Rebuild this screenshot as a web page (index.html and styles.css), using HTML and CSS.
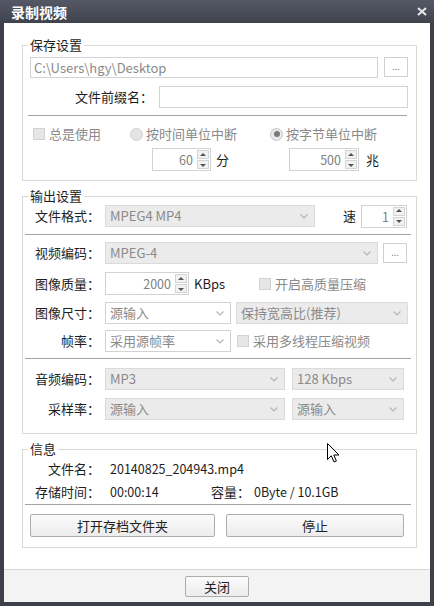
FILE: index.html
```html
<!DOCTYPE html>
<html lang="zh-CN">
<head>
<meta charset="utf-8">
<title>录制视频</title>
<link rel="stylesheet" href="styles.css">
</head>
<body>
<div class="window">
  <div class="titlebar">
    <span class="title">录制视频</span>
    <svg class="close" width="10" height="9" viewBox="0 0 10 9"><path d="M1 1 L9 8 M9 1 L1 8" /></svg>
  </div>
  <div class="content">
    <fieldset class="group g1">
      <legend>保存设置</legend>
      <div class="row r-path">
        <div class="input path">C:\Users\hgy\Desktop</div>
        <div class="btn-dots">...</div>
      </div>
      <div class="row r-prefix">
        <span class="lbl-prefix">文件前缀名<span class="colon">：</span></span>
        <div class="input prefix"></div>
      </div>
      <div class="sep sep1"></div>
      <div class="opts">
        <span class="opt"><i class="chk chk-first"></i>总是使用</span>
        <span class="opt"><i class="radio"></i>按时间单位中断</span>
        <span class="opt"><i class="radio on"></i>按字节单位中断</span>
      </div>
      <div class="spins">
        <span class="cell"></span>
        <span class="cell cell-min">
          <span class="spin s-min"><span class="val">60</span><span class="arrows"><span class="up"></span><span class="dn"></span></span></span>
          <span class="unit u-min">分</span>
        </span>
        <span class="cell cell-mb">
          <span class="spin s-mb"><span class="val">500</span><span class="arrows"><span class="up"></span><span class="dn"></span></span></span>
          <span class="unit u-mb">兆</span>
        </span>
      </div>
    </fieldset>

    <fieldset class="group g2">
      <legend>输出设置</legend>
      <div class="row r-fmt">
        <span class="lbl">文件格式<span class="colon">：</span></span>
        <div class="select sel-fmt"><span class="stext">MPEG4 MP4</span><svg class="chev" width="8" height="5" viewBox="0 0 8 5"><polyline points="0.5,0.5 4,4 7.5,0.5"/></svg></div>
        <span class="speed-lbl">速</span>
        <span class="spin s-speed"><span class="val">1</span><span class="arrows"><span class="up"></span><span class="dn"></span></span></span>
      </div>
      <div class="sep sep2"></div>
      <div class="row r-vcodec">
        <span class="lbl">视频编码<span class="colon">：</span></span>
        <div class="select sel-vcodec"><span class="stext">MPEG-4</span><svg class="chev" width="8" height="5" viewBox="0 0 8 5"><polyline points="0.5,0.5 4,4 7.5,0.5"/></svg></div>
        <div class="btn-dots dots-v">...</div>
      </div>
      <div class="row r-quality">
        <span class="lbl">图像质量<span class="colon">：</span></span>
        <span class="spin s-quality"><span class="val">2000</span><span class="arrows"><span class="up"></span><span class="dn"></span></span></span>
        <span class="kbps">KBps</span>
        <span class="opt"><i class="chk"></i>开启高质量压缩</span>
      </div>
      <div class="row r-size">
        <span class="lbl">图像尺寸<span class="colon">：</span></span>
        <div class="select white sel-half"><span class="stext">源输入</span><svg class="chev" width="8" height="5" viewBox="0 0 8 5"><polyline points="0.5,0.5 4,4 7.5,0.5"/></svg></div>
        <div class="select sel-aspect"><span class="stext">保持宽高比(推荐)</span><svg class="chev" width="8" height="5" viewBox="0 0 8 5"><polyline points="0.5,0.5 4,4 7.5,0.5"/></svg></div>
      </div>
      <div class="row r-fps">
        <span class="lbl">帧率<span class="colon">：</span></span>
        <div class="select white sel-half"><span class="stext">采用源帧率</span><svg class="chev" width="8" height="5" viewBox="0 0 8 5"><polyline points="0.5,0.5 4,4 7.5,0.5"/></svg></div>
        <span class="opt opt-mt"><i class="chk"></i>采用多线程压缩视频</span>
      </div>
      <div class="sep sep3"></div>
      <div class="row r-acodec">
        <span class="lbl">音频编码<span class="colon">：</span></span>
        <div class="select sel-a1"><span class="stext">MP3</span><svg class="chev" width="8" height="5" viewBox="0 0 8 5"><polyline points="0.5,0.5 4,4 7.5,0.5"/></svg></div>
        <div class="select sel-a2"><span class="stext">128 Kbps</span><svg class="chev" width="8" height="5" viewBox="0 0 8 5"><polyline points="0.5,0.5 4,4 7.5,0.5"/></svg></div>
      </div>
      <div class="row r-rate">
        <span class="lbl">采样率<span class="colon">：</span></span>
        <div class="select sel-a1"><span class="stext">源输入</span><svg class="chev" width="8" height="5" viewBox="0 0 8 5"><polyline points="0.5,0.5 4,4 7.5,0.5"/></svg></div>
        <div class="select sel-a2"><span class="stext">源输入</span><svg class="chev" width="8" height="5" viewBox="0 0 8 5"><polyline points="0.5,0.5 4,4 7.5,0.5"/></svg></div>
      </div>
    </fieldset>

    <fieldset class="group g3">
      <legend>信息</legend>
      <div class="row info info1">
        <span class="ilbl">文件名<span class="colon">：</span></span>
        <span class="ival">20140825_204943.mp4</span>
      </div>
      <div class="row info info2">
        <span class="ilbl">存储时间<span class="colon">：</span></span>
        <span class="ival ival-time">00:00:14</span>
        <span class="cap-lbl">容量<span class="colon">：</span></span>
        <span class="ival">0Byte / 10.1GB</span>
      </div>
      <div class="sep sep4"></div>
      <div class="row r-btns">
        <div class="btn btn-open">打开存档文件夹</div>
        <div class="btn btn-stop">停止</div>
      </div>
    </fieldset>
  </div>
  <div class="footer">
    <div class="btn btn-close">关闭</div>
  </div>
  <svg class="cursor" width="13" height="20" viewBox="0 0 13 20"><path d="M0.5 0.5 L0.5 16.5 L4.3 12.8 L7 19 L9.4 18 L6.8 12 L12 12 Z"/></svg>
</div>
</body>
</html>
```

FILE: styles.css
```css
* { box-sizing: border-box; }
html, body { margin: 0; padding: 0; }
body {
  background: #3d404a;
  font-family: "Noto Sans CJK SC", "Noto Sans", sans-serif;
  font-size: 13px;
  color: #1e1e1e;
}
.window {
  position: relative;
  width: 434px;
  height: 606px;
  background: #3d404a;
  padding: 0 4px 4px;
  display: flex;
  flex-direction: column;
}
.titlebar {
  height: 23px;
  margin: 0 -4px;
  padding: 0 7px 0 11px;
  display: flex;
  align-items: center;
  justify-content: space-between;
  background: linear-gradient(#555965, #40434e);
  flex: none;
}
.title {
  color: #ffffff;
  font-weight: bold;
  font-size: 14px;
  line-height: 18px;
}
.close path {
  stroke: #e4e4e4;
  stroke-width: 2.2;
  fill: none;
}
.content {
  height: 546px;
  background: #ffffff;
  padding-top: 13px;
  flex: none;
}
.footer {
  height: 33px;
  background: #f3f3f3;
  border-top: 1px solid #d9d9d9;
  display: flex;
  justify-content: center;
  align-items: center;
  flex: none;
}

.colon { font-family: "Noto Sans CJK TC", "Noto Sans CJK SC", sans-serif; }

/* group boxes */
.group {
  margin: 0 13px 0 18px;
  border: 1px solid #d9d9d9;
  padding: 0 8px 0 7px;
  min-width: 0;
}
.group legend {
  padding: 0 2px;
  margin-left: -2px;
  line-height: 18px;
  height: 18px;
  font-size: 13px;
  color: #1e1e1e;
}
.g1 { padding-top: 3px; padding-bottom: 9px; }
.g2 { margin-top: 6px; padding-top: 0; padding-bottom: 13px; }
.g3 { margin-top: 6px; padding-top: 0; padding-bottom: 10px; }

.row { display: flex; align-items: center; }
.sep { height: 1px; background: #a3a3a3; }
.sep1 { margin: 7px 1px 0 -2px; }
.sep2 { margin: 7px -3px 0 -5px; }
.sep3 { margin: 6px -3px 0 -5px; }
.sep4 { margin: 3px -3px 0 -5px; }

/* inputs */
.input {
  height: 22px;
  border: 1px solid #d3d3d3;
  background: #ffffff;
  padding: 0 3px;
  line-height: 19px;
  color: #8a8a8a;
  white-space: nowrap;
}
.r-path { height: 21px; align-items: flex-start; }
.path { width: 348px; height: 21px; font-size: 13px; }
.btn-dots {
  width: 24px;
  height: 20px;
  margin-left: 6px;
  border: 1px solid #d0d0d0;
  background: #ffffff;
  color: #8a8a8a;
  font-size: 9px;
  line-height: 18px;
  text-align: center;
  flex: none;
}
.dots-v { margin-left: 5px; }
.r-prefix { margin-top: 8px; }
.lbl-prefix { width: 123px; text-align: right; margin-right: 6px; line-height: 18px; flex: none; }
.prefix { flex: 1; }

/* options */
.opts {
  margin-top: 9px;
  display: grid;
  grid-template-columns: 100px 140px 138px;
  line-height: 18px;
  color: #8a8a8a;
}
.opt { display: flex; align-items: center; color: #8a8a8a; line-height: 18px; white-space: nowrap; }
.chk {
  display: block;
  width: 12px;
  height: 12px;
  border: 1px solid #d2d2d2;
  background: #e6e6e6;
  margin-right: 4px;
  flex: none;
}
.chk-first { margin-left: 3px; }
.radio {
  display: block;
  width: 13px;
  height: 13px;
  border-radius: 50%;
  border: 1px solid #d0d0d0;
  background: #e4e4e4;
  margin-right: 3px;
  flex: none;
  position: relative;
}
.radio.on { background: #e8e8e8; border-color: #c6c6c6; }
.radio.on::after {
  content: "";
  position: absolute;
  left: 2.5px;
  top: 2.5px;
  width: 6px;
  height: 6px;
  border-radius: 50%;
  background: #7a7a7a;
}

.spins {
  margin-top: 5px;
  display: grid;
  grid-template-columns: 100px 140px 138px;
  height: 23px;
}
.cell { display: flex; align-items: center; }
.cell-min { padding-left: 22px; }
.cell-mb { padding-left: 19px; }
.unit { line-height: 18px; }
.u-min { margin-left: 5px; }
.u-mb { margin-left: 7px; }

/* spinner */
.spin {
  display: flex;
  height: 23px;
  border: 1px solid #d2d2d2;
  background: #ffffff;
  flex: none;
}
.spin .val {
  flex: 1;
  text-align: right;
  padding-right: 4px;
  line-height: 21px;
  color: #808080;
  font-size: 12.5px;
}
.arrows {
  width: 13px;
  display: flex;
  flex-direction: column;
  padding: 1px 1px 1px 0;
  gap: 1px;
}
.arrows .up, .arrows .dn {
  flex: 1;
  border: 1px solid #d4d4d4;
  background: #f1f1f1;
  position: relative;
}
.arrows .up::after, .arrows .dn::after {
  content: "";
  position: absolute;
  left: 50%;
  top: 50%;
  margin-left: -3px;
  border-left: 3px solid transparent;
  border-right: 3px solid transparent;
}
.arrows .up::after { border-bottom: 3px solid #555555; margin-top: -2px; }
.arrows .dn::after { border-top: 3px solid #555555; margin-top: -1px; }
.s-min { width: 59px; }
.s-mb { width: 70px; }
.s-speed { width: 46px; margin-left: 5px; }
.s-quality { width: 84px; }

/* selects */
.lbl {
  width: 70px;
  text-align: right;
  margin-right: 5px;
  line-height: 18px;
  flex: none;
  white-space: nowrap;
}
.select {
  display: flex;
  align-items: center;
  height: 22px;
  border: 1px solid #dadada;
  background: #ebebeb;
  color: #8a8a8a;
  padding: 0 6px 0 4px;
  flex: none;
}
.select.white { background: #ffffff; border-color: #d2d2d2; }
.stext { flex: 1; line-height: 18px; white-space: nowrap; overflow: hidden; }
.chev polyline { fill: none; stroke: #b5b5b5; stroke-width: 1.2; }
.sel-fmt { width: 210px; }
.speed-lbl { margin-left: 28px; line-height: 18px; }
.sel-vcodec { width: 273px; }
.sel-half { width: 126px; }
.sel-aspect { width: 172px; margin-left: 5px; }
.sel-a1 { width: 180px; }
.sel-a2 { width: 112px; margin-left: 7px; }

.r-fmt { height: 22px; }
.r-vcodec { margin-top: 7px; height: 22px; }
.r-quality { margin-top: 8px; height: 23px; }
.kbps { width: 70px; padding-left: 5px; line-height: 18px; flex: none; }
.r-size { margin-top: 7px; height: 22px; }
.r-fps { margin-top: 6px; height: 22px; }
.opt-mt { margin-left: 6px; }
.r-acodec { margin-top: 9px; height: 22px; }
.r-rate { margin-top: 8px; height: 22px; }

/* info */
.info { line-height: 18px; height: 18px; }
.info1 { margin-top: 2px; }
.info2 { margin-top: 5px; }
.ilbl { width: 70px; text-align: right; margin-right: 10px; flex: none; white-space: nowrap; }
.ival { white-space: nowrap; font-size: 12.5px; }
.ival-time { width: 101px; flex: none; }
.cap-lbl { margin-right: 4px; }

/* buttons */
.btn {
  height: 23px;
  border: 1px solid #adadad;
  border-radius: 2px;
  background: linear-gradient(#fbfbfb, #ececec);
  color: #222222;
  text-align: center;
  line-height: 21px;
  flex: none;
}
.r-btns { margin-top: 9px; }
.btn-open { width: 185px; }
.btn-stop { width: 178px; margin-left: 11px; }
.btn-close { width: 64px; height: 21px; line-height: 19px; }

.cursor {
  position: absolute;
  left: 327px;
  top: 443px;
}
.cursor path { fill: #ffffff; stroke: #000000; stroke-width: 1; stroke-linejoin: miter; }
```
